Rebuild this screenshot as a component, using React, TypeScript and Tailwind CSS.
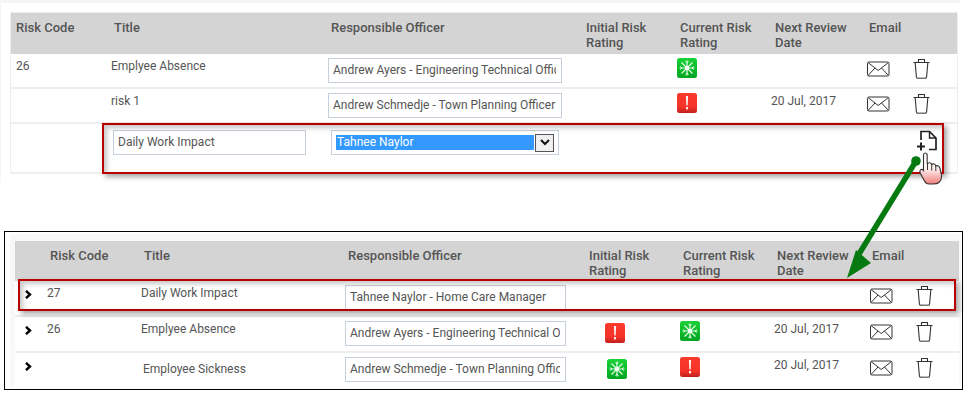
import React from "react";

const Envelope = () => (
  <svg width="23" height="16" viewBox="0 0 23 16" fill="none" stroke="#333" strokeWidth="1" className="block">
    <rect x="0.5" y="1" width="21.5" height="14" rx="1.5" />
    <path d="M1 1.5 L11.2 9.5 L21.5 1.5 M1 14.5 L8 7 M21.5 14.5 L14.5 7" />
  </svg>
);

const Trash = () => (
  <svg width="17" height="22" viewBox="0 0 17 22" fill="none" className="block">
    <path d="M0.5 4.5 H16.5 M5.5 4 V1.5 H11.5 V4" stroke="#333" strokeWidth="1.1" />
    <path d="M2.2 5 L3.4 19 Q3.6 20.5 5 20.5 H12 Q13.4 20.5 13.6 19 L14.8 5" stroke="#333" strokeWidth="1.1" />
    <path d="M3.6 19.5 Q4 21 5 21 H12 Q13 21 13.4 19.5 Z" fill="#777" />
  </svg>
);

const GreenIcon = () => (
  <svg width="20" height="20" viewBox="0 0 20 20" className="block">
    <defs>
      <linearGradient id="gg" x1="0" y1="0" x2="0" y2="1">
        <stop offset="0" stopColor="#19d336" />
        <stop offset="1" stopColor="#01a521" />
      </linearGradient>
    </defs>
    <rect width="20" height="20" rx="2.5" fill="url(#gg)" />
    <g stroke="#e4fbe6" strokeWidth="1.2" fill="none">
      <path d="M10 2.5 V17.5 M2.5 10 H17.5 M4.5 4.5 L15.5 15.5 M15.5 4.5 L4.5 15.5" />
      <path d="M8.4 3.2 L10 5 L11.6 3.2 M8.4 16.8 L10 15 L11.6 16.8 M3.2 8.4 L5 10 L3.2 11.6 M16.8 8.4 L15 10 L16.8 11.6" strokeWidth="0.9" />
    </g>
    <circle cx="10" cy="10" r="2.2" fill="#f4fef4" />
  </svg>
);

const RedIcon = () => (
  <svg width="20" height="20" viewBox="0 0 20 20" className="block">
    <defs>
      <linearGradient id="rg" x1="0" y1="0" x2="0" y2="1">
        <stop offset="0" stopColor="#fb3a2c" />
        <stop offset="0.7" stopColor="#f5332a" />
        <stop offset="1" stopColor="#c0201c" />
      </linearGradient>
    </defs>
    <rect width="20" height="20" rx="2.5" fill="url(#rg)" />
    <path d="M8.9 3 H11.1 L10.7 12.5 H9.3 Z" fill="#fff3ee" />
    <rect x="9" y="14" width="2" height="2.4" fill="#fff3ee" />
  </svg>
);

const Chevron = () => (
  <svg width="7" height="9" viewBox="0 0 7 9" fill="none" stroke="#000" strokeWidth="2.4" className="block">
    <path d="M1 0.8 L5 4.5 L1 8.2" />
  </svg>
);

const Field = ({ value, w }: { value: string; w: string }) => (
  <input
    readOnly
    value={value}
    className={`${w} h-[25px] border border-[#c6d0db] bg-white pb-[2px] pl-[4px] pr-[5px] text-[12px] text-[#555] outline-none`}
  />
);

const Head = ({ children, className = "" }: { children?: React.ReactNode; className?: string }) => (
  <div className={`text-[13px] font-medium leading-[15px] text-[#555] ${className}`}>{children}</div>
);

const TopHeaders = () => (
  <div className="grid h-[41px] grid-cols-[100px_217px_255px_94px_94px_96px_46px_43px] bg-[#d4d4d4] pt-[7px]">
    <Head className="pl-[5px]">Risk Code</Head>
    <Head className="pl-[3px]">Title</Head>
    <Head className="pl-[3px]">Responsible Officer</Head>
    <Head className="pl-[3px]">Initial Risk<br />Rating</Head>
    <Head className="pl-[3px]">Current Risk<br />Rating</Head>
    <Head className="pl-[4px]">Next Review<br />Date</Head>
    <Head className="pl-[2px]">Email</Head>
    <Head />
  </div>
);

const Actions = () => (
  <>
    <div className="pt-[7px]"><Envelope /></div>
    <div className="pt-[4px]"><Trash /></div>
  </>
);

const TopRow = ({ code, title, officer, rating, date }: { code: string; title: string; officer: string; rating: React.ReactNode; date?: string }) => (
  <div className="grid h-[33px] grid-cols-[100px_217px_255px_94px_94px_96px_46px_43px] bg-white text-[12px] leading-[15px] text-[#555]">
    <div className="pl-[5px] pt-[5px]">{code}</div>
    <div className="pt-[5px]">{title}</div>
    <div className="pt-[4px]"><Field value={officer} w="w-[234px]" /></div>
    <div />
    <div className="pt-[4px]">{rating}</div>
    <div className="pt-[5px]">{date}</div>
    <Actions />
  </div>
);

const TopTable = () => (
  <div className="h-[182px] w-[960px] border-l border-t-[3px] border-[#f5f5f5] pl-[9px] pt-[9px]">
    <div className="flex w-[948px] flex-col gap-[2px] border-x border-t border-[#eeeeee] bg-[#eeeeee] pb-[2px]">
      <div className="flex flex-col">
        <TopHeaders />
        <TopRow code="26" title="Emplyee Absence" officer="Andrew Ayers - Engineering Technical Officer" rating={<GreenIcon />} />
      </div>
      <TopRow code="" title="risk 1" officer="Andrew Schmedje - Town Planning Officer" rating={<RedIcon />} date="20 Jul, 2017" />
      <div className="grid h-[48px] grid-cols-[100px_219px_583px_44px] bg-white text-[12px] text-[#555]">
        <div />
        <div className="pl-[2px] pt-[6px]"><Field value="Daily Work Impact" w="w-[193px]" /></div>
        <div className="pl-[1px] pt-[6px]">
          <div className="flex h-[25px] w-[228px] items-center gap-[1px] border border-[#c6d0db] pl-[4px] pr-[3px]">
            <div className="h-[15px] w-[198px] bg-[#3399ff] pl-[1px] leading-[15px] text-white">Tahnee Naylor</div>
            <div className="flex h-[18px] w-[19px] items-center justify-center border border-[#555] bg-[#f0f0f0]">
              <svg width="10" height="7" viewBox="0 0 10 7" fill="none" stroke="#111" strokeWidth="2"><path d="M1 1 L5 5 L9 1" /></svg>
            </div>
          </div>
        </div>
        <div />
      </div>
    </div>
  </div>
);

const BottomRow = ({ code, title, officer, initial, current, date, titleClass = "pt-[5px]" }: {
  code: string; title: string; officer: string; initial?: React.ReactNode; current?: React.ReactNode; date?: string; titleClass?: string;
}) => (
  <div className="grid h-[34px] grid-cols-[32px_94px_204px_241px_94px_94px_96px_46px_43px] bg-white text-[12px] leading-[15px] text-[#555]">
    <div className="pl-[10px] pt-[9px]"><Chevron /></div>
    <div className="pt-[5px]">{code}</div>
    <div className={titleClass}>{title}</div>
    <div className="pt-[4px]"><Field value={officer} w="w-[221px]" /></div>
    <div className="pt-[6px]">{initial}</div>
    <div className="pt-[4px]">{current}</div>
    <div className="pt-[5px]">{date}</div>
    <Actions />
  </div>
);

const BottomTable = () => (
  <div className="ml-[4px] mt-[49px] h-[159px] w-[959px] border border-black pl-[5px] pt-[2px]">
    <div className="h-[152px] w-[951px] overflow-hidden bg-[#f8f8f8] pl-[5px] pr-[2px] pt-[7px]">
      <div className="grid h-[40px] grid-cols-[35px_94px_204px_241px_94px_94px_95px_45px] bg-[#d4d4d4] pt-[7px]">
        <Head />
        <Head>Risk Code</Head>
        <Head>Title</Head>
        <Head>Responsible Officer</Head>
        <Head>Initial Risk<br />Rating</Head>
        <Head>Current Risk<br />Rating</Head>
        <Head>Next Review<br />Date</Head>
        <Head>Email</Head>
      </div>
      <div className="flex flex-col gap-[2px] bg-[#eeeeee]">
        <BottomRow code="27" title="Daily Work Impact" officer="Tahnee Naylor - Home Care Manager" />
        <BottomRow code="26" title="Emplyee Absence" officer="Andrew Ayers - Engineering Technical Officer" initial={<div className="pl-[19px]"><RedIcon /></div>} current={<GreenIcon />} date="20 Jul, 2017" />
        <BottomRow code="" title="Employee Sickness" titleClass="pl-[2px] pt-[9px]" officer="Andrew Schmedje - Town Planning Officer" initial={<div className="pl-[21px]"><GreenIcon /></div>} current={<RedIcon />} date="20 Jul, 2017" />
      </div>
    </div>
  </div>
);

const Highlight = ({ className }: { className: string }) => (
  <div className={`pointer-events-none absolute border-2 border-[#b80000] shadow-[3px_3px_5px_rgba(0,0,0,0.35),inset_3px_3px_5px_rgba(0,0,0,0.22)] ${className}`} />
);

export default function App() {
  return (
    <div className="relative h-[406px] w-[968px] overflow-hidden bg-white font-['Roboto',sans-serif]">
      <TopTable />
      <BottomTable />

      <Highlight className="left-[102px] top-[123px] h-[51px] w-[842px]" />
      <Highlight className="left-[18px] top-[279px] h-[32px] w-[938px]" />

      {/* new-document icon */}
      <svg className="absolute left-[916px] top-[130px]" width="22" height="22" viewBox="0 0 22 22" fill="none" stroke="#222" strokeWidth="1.7">
        <path d="M5 10 V1.5 H13.5 L20 8 V19.5 H13" />
        <path d="M13.5 1.5 V8 H20" strokeWidth="1.4" />
        <path d="M1 16.5 H9 M5 12.5 V20.5" strokeWidth="2" />
      </svg>

      {/* green arrow */}
      <svg className="absolute left-[840px] top-[150px]" width="90" height="135" viewBox="0 0 90 135" fill="none">
        <path d="M76 11 L19 104" stroke="#067a10" strokeWidth="5.5" />
        <circle cx="76" cy="11" r="4.8" fill="#067a10" />
        <path d="M7 128 L16 100 L31 113 Z" fill="#067a10" />
      </svg>

      {/* hand cursor */}
      <svg className="absolute left-[919px] top-[152px]" width="25" height="33" viewBox="0 0 25 33">
        <defs>
          <linearGradient id="hand" x1="0" y1="0" x2="0" y2="1">
            <stop offset="0" stopColor="#ffffff" />
            <stop offset="0.5" stopColor="#fff0ee" />
            <stop offset="1" stopColor="#f07f7c" />
          </linearGradient>
        </defs>
        <path
          d="M4.5 3 Q4.5 1 6.3 1 Q8.2 1 8.2 3 V12 Q9 10.5 10.8 10.8 Q12.3 11 12.7 12.5 Q13.8 11.5 15.2 12 Q16.6 12.5 16.8 14 Q18 13.2 19.3 14 Q20.6 14.8 21 16.5 L22.5 23 Q23 28 20 30.5 Q18 32 14 32 H10 Q7 32 5.5 29 L1.2 21 Q0.3 18.5 2 17.5 Q3.4 17 4.5 18.5 Z"
          fill="url(#hand)"
          stroke="#333"
          strokeWidth="1.1"
        />
        <path d="M8.5 12 V18 M12.7 12.5 V18.5 M16.8 14 V19" stroke="#333" strokeWidth="1" fill="none" />
      </svg>
    </div>
  );
}
